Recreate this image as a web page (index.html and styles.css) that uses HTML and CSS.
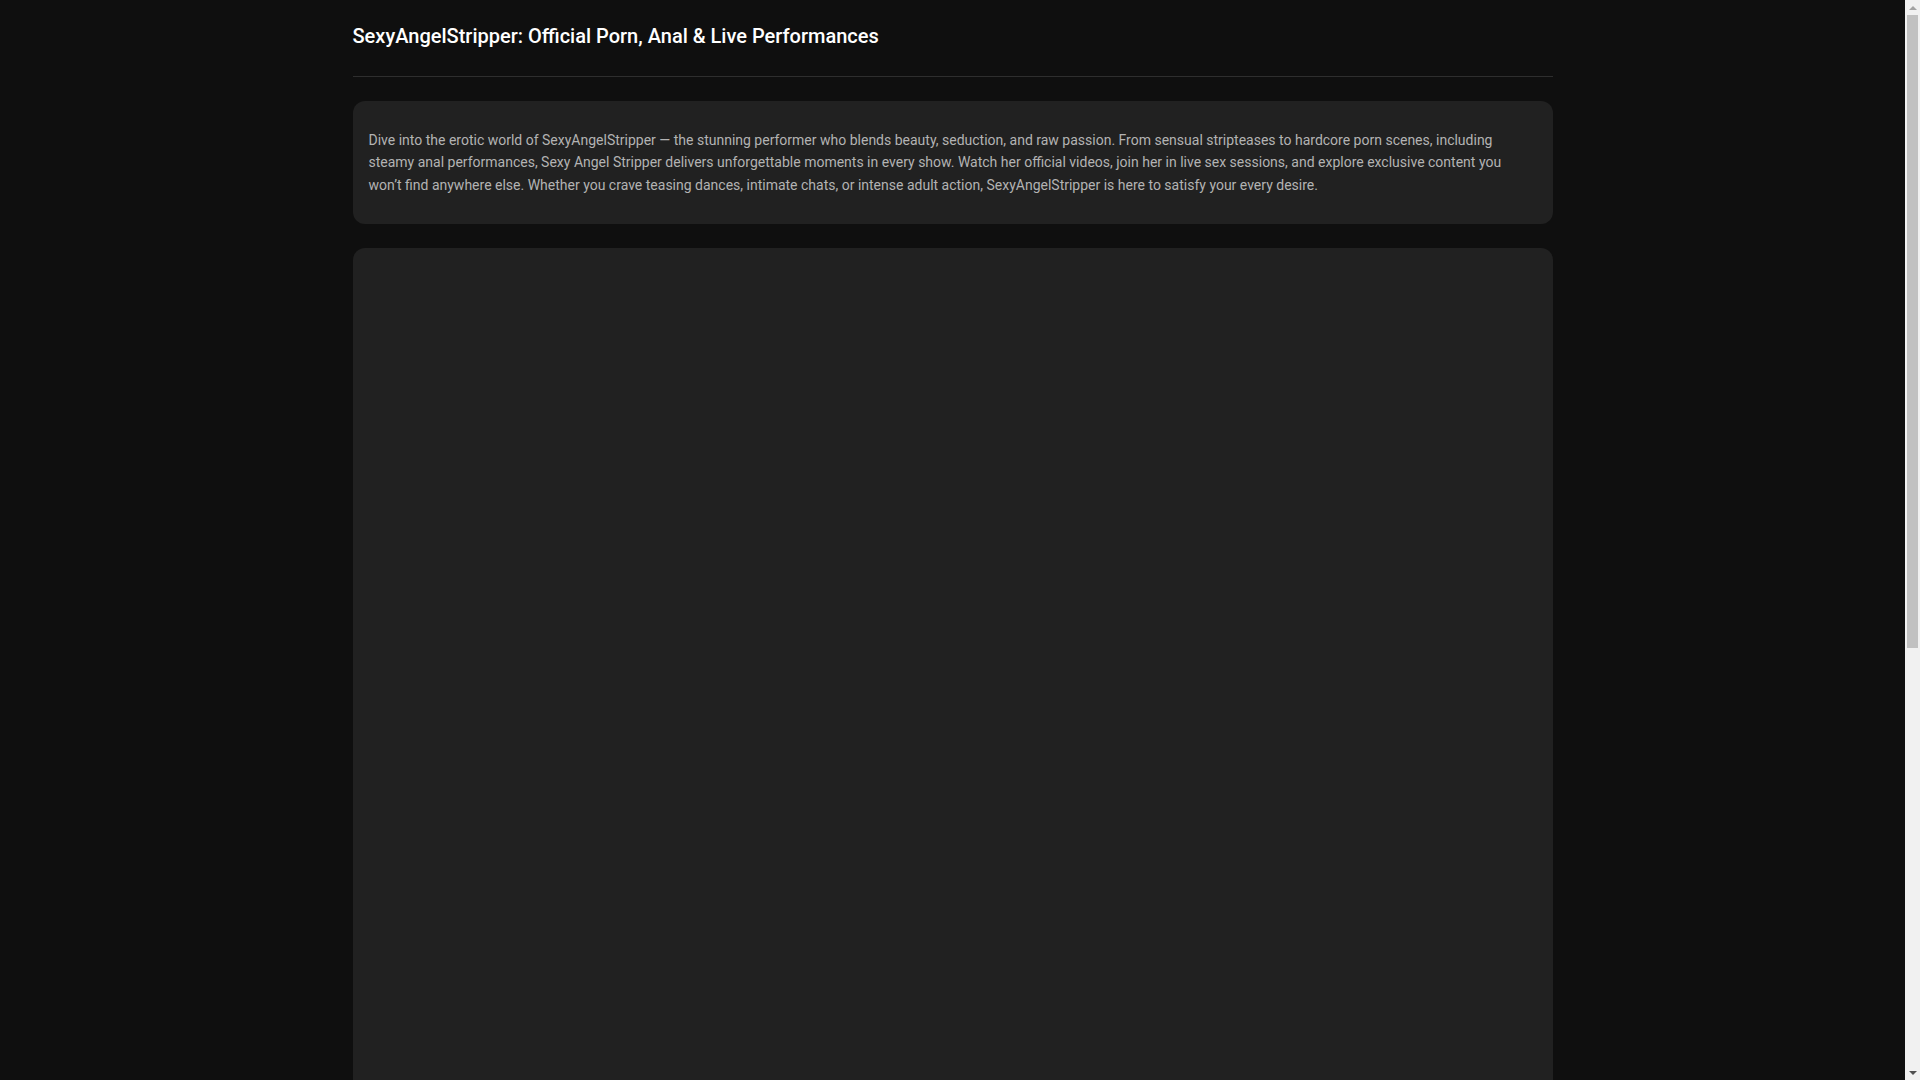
FILE: index.html
```html
<!DOCTYPE html>
<html lang="en">
<head>
<meta charset="utf-8">
<title>SexyAngelStripper: Official Porn, Anal &amp; Live Performances</title>
<link rel="stylesheet" href="styles.css">
</head>
<body>
<div class="page">
  <div class="container">
    <header class="site-header">
      <h1 class="site-title">SexyAngelStripper: Official Porn, Anal &amp; Live Performances</h1>
    </header>
    <section class="card intro">
      <p>Dive into the erotic world of SexyAngelStripper — the stunning performer who blends beauty, seduction, and raw passion. From sensual stripteases to hardcore porn scenes, including steamy anal performances, Sexy Angel Stripper delivers unforgettable moments in every show. Watch her official videos, join her in live sex sessions, and explore exclusive content you won’t find anywhere else. Whether you crave teasing dances, intimate chats, or intense adult action, SexyAngelStripper is here to satisfy your every desire.</p>
    </section>
    <section class="card player"></section>
  </div>
</div>
<div class="scrollbar" aria-hidden="true">
  <div class="sb-btn"><span class="arrow-up"></span></div>
  <div class="sb-track"><div class="sb-thumb"></div></div>
  <div class="sb-btn"><span class="arrow-down"></span></div>
</div>
</body>
</html>
```

FILE: styles.css
```css
html, body {
  margin: 0;
  padding: 0;
}
body {
  background: #0f0f0f;
  color: #b3b3b3;
  font-family: Roboto, "Noto Sans", "Liberation Sans", sans-serif;
  display: flex;
  height: 100vh;
  overflow: hidden;
}
.page {
  flex: 1;
  min-width: 0;
  overflow: hidden;
}
.container {
  max-width: 1200px;
  margin: 0 auto;
  display: flex;
  flex-direction: column;
  gap: 24px;
}
.site-header {
  padding: 24px 0 28px;
  border-bottom: 1px solid #2e2e2e;
}
.site-title {
  margin: 0;
  font-size: 20px;
  line-height: 24px;
  font-weight: 500;
  color: #ffffff;
}
.card {
  background: #212121;
  border-radius: 12px;
}
.intro {
  padding: 16px;
}
.intro p {
  margin: 12px 0 12px;
  font-size: 14px;
  line-height: 22.4px;
  color: #b3b3b3;
}
.player {
  height: 1000px;
  flex-shrink: 0;
  margin-bottom: 24px;
}

/* scrollbar */
.scrollbar {
  width: 15px;
  flex-shrink: 0;
  height: 100vh;
  background: #f1f1f1;
  display: flex;
  flex-direction: column;
}
.sb-btn {
  height: 15px;
  flex-shrink: 0;
  display: flex;
  align-items: center;
  justify-content: center;
}
.arrow-up {
  width: 0;
  height: 0;
  border-left: 4px solid transparent;
  border-right: 4px solid transparent;
  border-bottom: 4px solid #a3a3a3;
}
.arrow-down {
  width: 0;
  height: 0;
  border-left: 4px solid transparent;
  border-right: 4px solid transparent;
  border-top: 4px solid #505050;
}
.sb-track {
  flex: 1;
  padding: 0 2px;
}
.sb-thumb {
  height: 633px;
  background: #c1c1c1;
}
```
